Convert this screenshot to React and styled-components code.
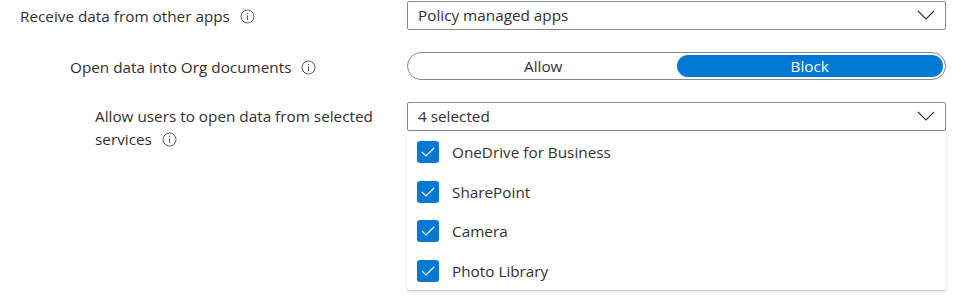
import React from "react";
import styled, { createGlobalStyle } from "styled-components";

const GlobalStyle = createGlobalStyle`
  html, body, #root {
    height: 100%;
  }
  body {
    margin: 0;
    background: #ffffff;
    font-family: "Segoe UI", "Open Sans", "Noto Sans", sans-serif;
    color: #323130;
  }
`;

const services = ["OneDrive for Business", "SharePoint", "Camera", "Photo Library"];

const InfoIcon = () => (
  <InfoSvg width="15" height="15" viewBox="0 0 15 15">
    <circle cx="7.5" cy="7.5" r="6.5" fill="none" stroke="#605e5c" strokeWidth="1" />
    <line x1="7.5" y1="6.5" x2="7.5" y2="11" stroke="#605e5c" strokeWidth="1" />
    <circle cx="7.5" cy="4.5" r="0.7" fill="#605e5c" />
  </InfoSvg>
);

const Chevron = () => (
  <svg width="18" height="10" viewBox="0 0 18 10">
    <polyline points="1,1 9,9 17,1" fill="none" stroke="#323130" strokeWidth="1.1" />
  </svg>
);

const Check = () => (
  <svg width="14" height="10" viewBox="0 0 14 10">
    <polyline points="1,5 5,9 13,1" fill="none" stroke="#ffffff" strokeWidth="1.2" />
  </svg>
);

const App = () => {
  return (
    <>
      <GlobalStyle />
      <Page>
        <Row>
          <Label indent={0}>
            <span>Receive data from other apps</span>
            <InfoIcon />
          </Label>
          <Dropdown>
            <span>Policy managed apps</span>
            <Chevron />
          </Dropdown>
        </Row>

        <Row gap={22}>
          <Label indent={50}>
            <span>Open data into Org documents</span>
            <InfoIcon />
          </Label>
          <Toggle>
            <ToggleOption>Allow</ToggleOption>
            <ToggleOption active>Block</ToggleOption>
          </Toggle>
        </Row>

        <Row gap={21}>
          <Label indent={75} wrap>
            <span>
              Allow users to open data from selected services
              <InfoIcon />
            </span>
          </Label>
          <DropWrap>
            <Dropdown>
              <span>4 selected</span>
              <Chevron />
            </Dropdown>
            <Menu>
              {services.map((s) => (
                <Option key={s}>
                  <Box>
                    <Check />
                  </Box>
                  {s}
                </Option>
              ))}
            </Menu>
          </DropWrap>
        </Row>
      </Page>
    </>
  );
};

const Page = styled.div`
  box-sizing: border-box;
  min-height: 100%;
  padding: 1px 0 0 20px;
  font-size: 15.3px;
`;

const Row = styled.div`
  display: grid;
  grid-template-columns: 387px 539px;
  margin-top: ${(p) => p.gap || 0}px;
`;

const Label = styled.div`
  padding-left: ${(p) => p.indent}px;
  padding-right: ${(p) => (p.wrap ? 10 : 0)}px;
  display: flex;
  align-items: ${(p) => (p.wrap ? "flex-start" : "center")};
  line-height: 23px;
  min-height: 29px;
  padding-top: ${(p) => (p.wrap ? 3 : 1)}px;
  box-sizing: border-box;
  span {
    display: inline;
  }
`;

const InfoSvg = styled.svg`
  margin-left: 10px;
  vertical-align: -2px;
  flex-shrink: 0;
`;

const Dropdown = styled.div`
  box-sizing: border-box;
  height: 29px;
  border: 1px solid #8a8886;
  border-radius: 2px;
  display: flex;
  align-items: center;
  justify-content: space-between;
  padding: 0 10px 1px 10px;
  background: #fff;
`;

const Toggle = styled.div`
  box-sizing: border-box;
  height: 28px;
  border: 1px solid #8a8886;
  border-radius: 14px;
  padding: 2px;
  display: grid;
  grid-template-columns: 1fr 1fr;
`;

const ToggleOption = styled.div`
  border-radius: 12px;
  display: flex;
  align-items: center;
  justify-content: center;
  background: ${(p) => (p.active ? "#0078d4" : "transparent")};
  color: ${(p) => (p.active ? "#ffffff" : "#323130")};
`;

const DropWrap = styled.div`
  position: relative;
`;

const Menu = styled.div`
  position: absolute;
  top: 30px;
  left: 0;
  right: 0;
  height: 158px;
  overflow: hidden;
  background: #fff;
  border-radius: 2px;
  box-shadow: 0 1.6px 3.6px rgba(0, 0, 0, 0.13), 0 0.3px 0.9px rgba(0, 0, 0, 0.11);
`;

const Option = styled.div`
  height: 39.7px;
  display: flex;
  align-items: center;
  gap: 13px;
  padding-left: 10px;
  box-sizing: border-box;
`;

const Box = styled.div`
  width: 22px;
  height: 22px;
  border-radius: 3px;
  background: #0078d4;
  display: flex;
  align-items: center;
  justify-content: center;
`;

export default App;
